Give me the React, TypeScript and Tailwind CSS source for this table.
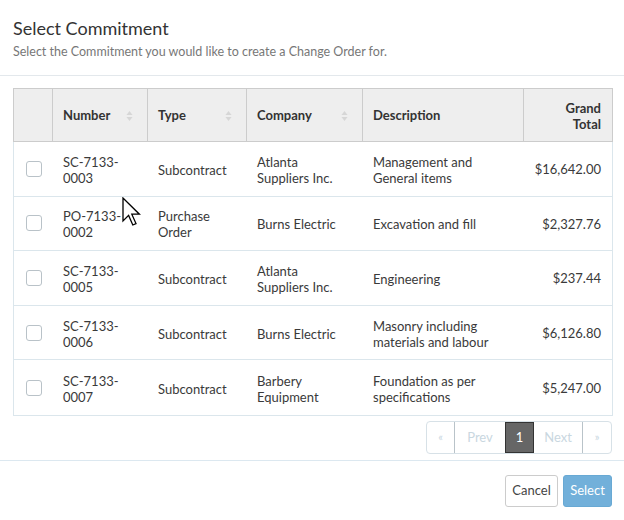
import React from "react";

const rows = [
  { num: ["SC-7133-", "0003"], type: ["Subcontract"], company: ["Atlanta", "Suppliers Inc."], desc: ["Management and", "General items"], total: "$16,642.00" },
  { num: ["PO-7133-", "0002"], type: ["Purchase", "Order"], company: ["Burns Electric"], desc: ["Excavation and fill"], total: "$2,327.76" },
  { num: ["SC-7133-", "0005"], type: ["Subcontract"], company: ["Atlanta", "Suppliers Inc."], desc: ["Engineering"], total: "$237.44" },
  { num: ["SC-7133-", "0006"], type: ["Subcontract"], company: ["Burns Electric"], desc: ["Masonry including", "materials and labour"], total: "$6,126.80" },
  { num: ["SC-7133-", "0007"], type: ["Subcontract"], company: ["Barbery", "Equipment"], desc: ["Foundation as per", "specifications"], total: "$5,247.00" },
];

function Lines({ l }: { l: string[] }) {
  return (
    <div className="leading-[16px]">
      {l.map((s, i) => (
        <div key={i}>{s}</div>
      ))}
    </div>
  );
}

function SortIcon() {
  return (
    <svg width="7" height="12" viewBox="0 0 7 12" className="shrink-0">
      <path d="M3.5 1 L6.5 5 L0.5 5 Z" fill="#d6d6d6" />
      <path d="M3.5 11 L6.5 7 L0.5 7 Z" fill="#d6d6d6" />
    </svg>
  );
}

const cols = "grid grid-cols-[39px_95px_99px_116px_161px_1fr]";

export default function App() {
  return (
    <div className="relative w-[624px] h-[520px] bg-white text-[#3a3a3a] text-[13px]" style={{ fontFamily: "Lato, 'Open Sans', sans-serif" }}>
      <div className="px-[13px] pt-[16px] pb-[14px] border-b border-[#e3e8ec]">
        <div className="text-[18px] leading-[24px] text-[#333]">Select Commitment</div>
        <div className="text-[12.5px] leading-[19px] pt-[2px] text-[#777]">Select the Commitment you would like to create a Change Order for.</div>
      </div>

      <div className="mx-[13px] mt-[12px] w-[600px]">
        <div className={`${cols} h-[54px] bg-[#eeeeee] border border-[#cccccc] font-bold text-[#333] pt-[2px]`}>
          <div className="border-r border-[#cccccc] -mt-[2px]"></div>
          <div className="border-r border-[#cccccc] -mt-[2px] pt-[2px] flex items-center justify-between pl-[10px] pr-[14px]">
            <span>Number</span>
            <SortIcon />
          </div>
          <div className="border-r border-[#cccccc] -mt-[2px] pt-[2px] flex items-center justify-between pl-[10px] pr-[14px]">
            <span>Type</span>
            <SortIcon />
          </div>
          <div className="border-r border-[#cccccc] -mt-[2px] pt-[2px] flex items-center justify-between pl-[10px] pr-[14px]">
            <span>Company</span>
            <SortIcon />
          </div>
          <div className="border-r border-[#cccccc] -mt-[2px] pt-[2px] flex items-center pl-[10px]">
            <span>Description</span>
          </div>
          <div className="flex items-center justify-end pr-[11px] text-right leading-[16px]">
            <span>
              Grand
              <br />
              Total
            </span>
          </div>
        </div>
        <div className="border-x border-b border-[#dbe6ec]">
          {rows.map((r, i) => (
            <div key={i} className={`${cols} h-[54.6px] items-center pt-[2px] ${i < rows.length - 1 ? "border-b border-[#dbe6ec]" : ""}`}>
              <div className="flex justify-center -mt-[2px]">
                <div className="w-[16px] h-[16px] rounded-[3px] border border-[#b9c2c8] bg-white"></div>
              </div>
              <div className="pl-[10px]"><Lines l={r.num} /></div>
              <div className="pl-[10px]"><Lines l={r.type} /></div>
              <div className="pl-[10px]"><Lines l={r.company} /></div>
              <div className="pl-[10px]"><Lines l={r.desc} /></div>
              <div className="pr-[11px] text-right">{r.total}</div>
            </div>
          ))}
        </div>
      </div>

      <div className="flex justify-end pr-[12px] mt-[5px]">
        <div className="flex h-[33px] border border-[#d7e1e7] rounded-[4px] text-[#c9d7df] text-[13px] overflow-hidden">
          <div className="w-[28px] flex items-center justify-center text-[11px] border-r border-[#b9c3c9]">«</div>
          <div className="w-[50px] flex items-center justify-center">Prev</div>
          <div className="w-[29px] flex items-center justify-center bg-[#666666] border border-[#333333] text-white">1</div>
          <div className="w-[49px] flex items-center justify-center border-r border-[#b9c3c9]">Next</div>
          <div className="w-[28px] flex items-center justify-center text-[11px]">»</div>
        </div>
      </div>

      <div className="mt-[6px] border-t border-[#dce8f0] flex justify-end gap-[5px] pr-[12px] pt-[14px]">
        <button className="h-[32px] w-[53px] border border-[#cccccc] rounded-[3px] bg-white text-[#444] text-[13px]">Cancel</button>
        <button className="h-[32px] w-[49px] border border-[#68a9d4] rounded-[3px] bg-[#72b0da] text-white text-[13px]">Select</button>
      </div>

      <svg className="absolute left-[122px] top-[197px]" width="20" height="30" viewBox="0 0 20 30">
        <path d="M1 1 L1 24 L6.6 18.4 L10.8 28 L14 26.6 L9.8 17.2 L17.4 17.2 Z" fill="white" stroke="black" strokeWidth="1.3" strokeLinejoin="miter" />
      </svg>
    </div>
  );
}
